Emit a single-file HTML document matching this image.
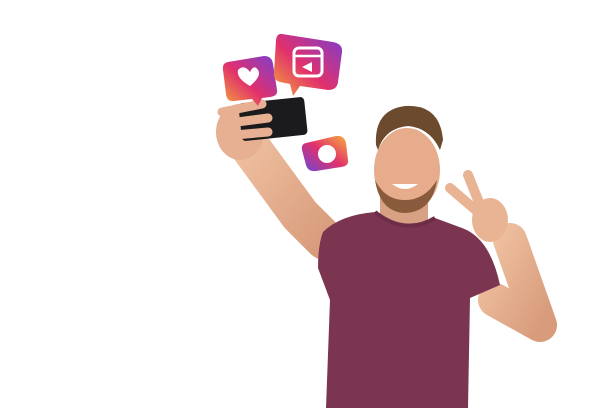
<!DOCTYPE html>
<html><head><style>
html,body{margin:0;padding:0;background:#fff;}
svg{display:block}
</style></head><body>
<svg width="612" height="408" viewBox="0 0 612 408" xmlns="http://www.w3.org/2000/svg">
<defs>
<linearGradient id="ig" x1="0" y1="1" x2="1" y2="0">
<stop offset="0" stop-color="#f5a63a"/><stop offset="0.45" stop-color="#e1306c"/><stop offset="1" stop-color="#7b3fd0"/>
</linearGradient>
<linearGradient id="ig2" x1="0" y1="1" x2="1" y2="0">
<stop offset="0" stop-color="#6a48d8"/><stop offset="0.5" stop-color="#e1306c"/><stop offset="1" stop-color="#f7b03c"/>
</linearGradient>
<linearGradient id="sk" x1="0" y1="0" x2="1" y2="1">
<stop offset="0" stop-color="#efc0a0"/><stop offset="1" stop-color="#d89c7c"/>
</linearGradient>
</defs>
<!-- left arm -->
<path d="M245,140 L300,215 L325,240" stroke="url(#sk)" stroke-width="40" fill="none" stroke-linecap="round" stroke-linejoin="round"/>
<!-- hand -->
<ellipse cx="240" cy="132" rx="24" ry="28" fill="#e8b092"/>
<!-- right arm -->
<path d="M495,300 L540,325 L510,240" stroke="url(#sk)" stroke-width="34" fill="none" stroke-linecap="round" stroke-linejoin="round"/>
<ellipse cx="490" cy="220" rx="18" ry="22" fill="#e9b494"/>
<path d="M482,210 L468,175" stroke="#e9b494" stroke-width="10" stroke-linecap="round"/>
<path d="M478,212 L450,188" stroke="#e9b494" stroke-width="10" stroke-linecap="round"/>
<!-- neck -->
<rect x="380" y="190" width="48" height="40" fill="#d9a184"/>
<!-- shirt -->
<path d="M323,232 Q340,215 375,212 Q405,232 435,218 L462,228 Q490,238 500,285 L470,298 L468,408 L326,408 L330,300 L318,268 Q318,245 323,232 Z" fill="#7c3550"/>
<path d="M375,212 Q405,236 435,218" stroke="#6e2d46" stroke-width="4" fill="none"/>
<!-- face -->
<ellipse cx="407" cy="170" rx="33" ry="42" fill="#e6ac8c"/>
<path d="M375,180 Q380,212 405,213 Q432,212 437,180 Q425,200 405,200 Q385,200 375,180 Z" fill="#8a5a3c"/>
<path d="M392,184 Q405,194 418,184 Z" fill="#fff"/>
<!-- hair -->
<path d="M376,145 Q374,110 405,106 Q440,104 443,140 L440,150 Q430,128 408,126 Q385,128 378,150 Z" fill="#6b4a2e"/>
<!-- phone -->
<rect x="240" y="100" width="66" height="38" rx="4" fill="#1b1b1d" transform="rotate(-6 273 119)"/>
<!-- fingers over phone -->
<path d="M222,112 L262,104 M222,124 L268,118 M224,136 L268,132" stroke="#e8b092" stroke-width="9" stroke-linecap="round"/>
<!-- icons -->
<path d="M228,62 L264,56 Q272,56 273,64 L277,90 Q278,96 270,97 L262,98 L258,106 L252,99 L234,101 Q227,102 226,94 L223,70 Q222,63 228,62 Z" fill="url(#ig)"/>
<path d="M250,72 Q244,64 238,70 Q236,78 250,86 Q262,76 258,70 Q254,64 250,72 Z" fill="#fff"/>
<path d="M282,34 L333,42 Q343,44 342,52 L338,82 Q337,90 328,90 L300,86 L293,96 L290,84 L280,82 Q273,80 274,72 L276,40 Q277,33 282,34 Z" fill="url(#ig)"/>
<rect x="294" y="48" width="28" height="28" rx="5" fill="none" stroke="#fff" stroke-width="3"/>
<line x1="294" y1="56" x2="322" y2="56" stroke="#fff" stroke-width="2.5"/>
<path d="M312,62 L302,67 L312,72 Z" fill="#fff"/>
<path d="M306,143 L336,136 Q344,135 346,143 L348,160 Q349,166 341,167 L316,171 Q308,172 306,165 L302,150 Q301,144 306,143 Z" fill="url(#ig2)"/>
<circle cx="327" cy="154" r="9" fill="#fff"/>
</svg>
</body></html>
